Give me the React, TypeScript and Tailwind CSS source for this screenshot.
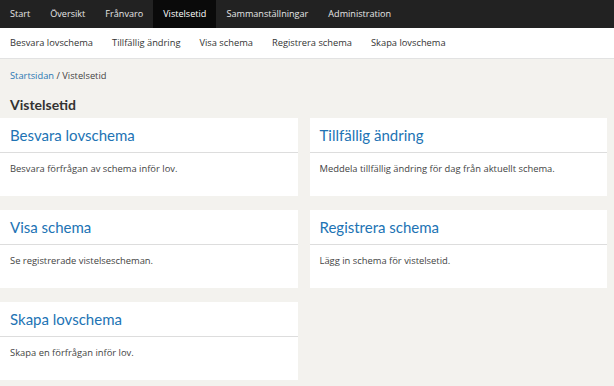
import React from "react";

const top = ["Start", "Översikt", "Frånvaro", "Vistelsetid", "Sammanställningar", "Administration"];
const sub = ["Besvara lovschema", "Tillfällig ändring", "Visa schema", "Registrera schema", "Skapa lovschema"];
const cards = [
  { t: "Besvara lovschema", d: "Besvara förfrågan av schema inför lov." },
  { t: "Tillfällig ändring", d: "Meddela tillfällig ändring för dag från aktuellt schema." },
  { t: "Visa schema", d: "Se registrerade vistelsescheman." },
  { t: "Registrera schema", d: "Lägg in schema för vistelsetid." },
  { t: "Skapa lovschema", d: "Skapa en förfrågan inför lov." },
];

export default function App() {
  return (
    <div className="w-[614px] h-[386px] overflow-hidden bg-[#f3f2ee]" style={{ fontFamily: '"Open Sans", sans-serif' }}>
      <div className="h-[28px] bg-[#222222] flex">
        {top.map((x) => (
          <div
            key={x}
            className={
              "px-[10px] flex items-center text-[9.1px] text-[#e6e6e6] " +
              (x === "Vistelsetid" ? "bg-[#0a0a0a] text-white" : "")
            }
          >
            {x}
          </div>
        ))}
      </div>
      <div className="h-[31px] bg-white border-b border-[#e2e2e2] flex items-center gap-[19px] px-[10px]">
        {sub.map((x) => (
          <div key={x} className="text-[9.3px] text-[#333]">
            {x}
          </div>
        ))}
      </div>
      <div className="px-[10px] h-[32px] flex items-center text-[9.3px] text-[#444] pt-[2px]">
        <span className="text-[#2a78b3]">Startsidan</span>
        <span>&nbsp;/ Vistelsetid</span>
      </div>
      <div
        className="px-[10px] h-[27px] flex items-center text-[14px] font-bold text-[#333]"
        style={{ fontFamily: 'Lato, sans-serif' }}
      >
        Vistelsetid
      </div>
      <div className="grid grid-cols-2 gap-x-[12px] gap-y-[14px] pr-[7px]">
        {cards.map((c) => (
          <div key={c.t} className="bg-white h-[78px]">
            <div
              className="h-[35px] border-b border-[#dddddd] flex items-center px-[10px] text-[15px] text-[#2173b4]"
              style={{ fontFamily: 'Lato, sans-serif' }}
            >
              {c.t}
            </div>
            <div className="px-[10px] pt-[9px] text-[9.4px] text-[#444]">{c.d}</div>
          </div>
        ))}
      </div>
    </div>
  );
}
